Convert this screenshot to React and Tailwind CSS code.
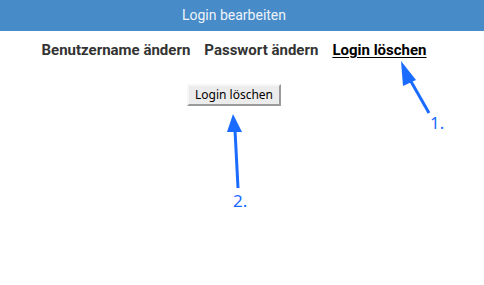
export default function App() {
  return (
    <div className="relative w-[484px] h-[285px] bg-white overflow-hidden font-['Roboto',sans-serif]">
      <div className="h-[31px] bg-[#478bc9] flex items-center justify-center pr-[16px] text-[14px] text-[#eef4fa]">
        Login bearbeiten
      </div>
      <nav className="flex justify-center gap-[14px] pt-[8px] pr-[16px] text-[15px] font-bold text-[#333]">
        <span>Benutzername ändern</span>
        <span>Passwort ändern</span>
        <span className="text-black underline underline-offset-2">Login löschen</span>
      </nav>
      <div className="flex justify-center pt-[22px] pr-[16px]">
        <button
          type="button"
          className="h-[22px] px-[6px] bg-[#ececec] border-2 border-t-[#f7f7f7] border-l-[#f7f7f7] border-r-[#9a9a9a] border-b-[#9a9a9a] text-[12px] text-black font-['Noto_Sans',sans-serif] leading-none"
        >
          Login löschen
        </button>
      </div>

      <svg className="absolute inset-0 pointer-events-none" width="484" height="285">
        <line x1="429" y1="113" x2="409" y2="78" stroke="#1a6bff" strokeWidth="3" />
        <polygon points="401,61 416,80 403,86" fill="#1a6bff" />
        <line x1="238" y1="188" x2="235" y2="130" stroke="#1a6bff" strokeWidth="3" />
        <polygon points="233,114 242,132 227,132" fill="#1a6bff" />
      </svg>
      <span className="absolute left-[430px] top-[110px] text-[17px] text-[#1a6bff] font-['Noto_Sans',sans-serif]">1.</span>
      <span className="absolute left-[233px] top-[188px] text-[17px] text-[#1a6bff] font-['Noto_Sans',sans-serif]">2.</span>
    </div>
  )
}
